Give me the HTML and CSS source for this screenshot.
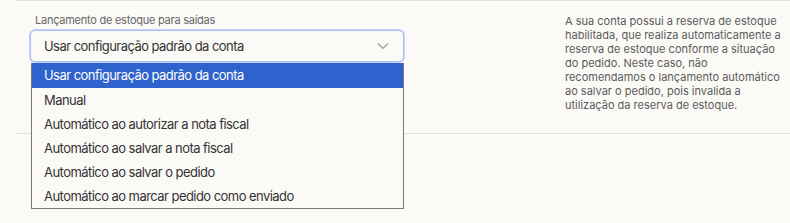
FILE: index.html
```html
<!DOCTYPE html>
<html lang="pt-BR">
<head>
  <meta charset="UTF-8" />
  <title>Lançamento de estoque</title>
  <link rel="stylesheet" href="styles.css">
</head>
<body>
  <div class="section">
    <div class="row">
      <div class="field">
        <label class="field-label">Lançamento de estoque para saídas</label>
        <div class="select">
          <span>Usar configuração padrão da conta</span>
          <svg class="chevron" width="12" height="8" viewBox="0 0 12 8">
            <path d="M1 1.5 L6 6.5 L11 1.5" fill="none" stroke="#9a9a9a" stroke-width="1.2"/>
          </svg>
        </div>
        <ul class="options">
          <li class="selected">Usar configuração padrão da conta</li>
          <li>Manual</li>
          <li>Automático ao autorizar a nota fiscal</li>
          <li>Automático ao salvar a nota fiscal</li>
          <li>Automático ao salvar o pedido</li>
          <li>Automático ao marcar pedido como enviado</li>
        </ul>
      </div>
      <p class="hint">A sua conta possui a reserva de estoque habilitada, que realiza automaticamente a reserva de estoque conforme a situação do pedido. Neste caso, não recomendamos o lançamento automático ao salvar o pedido, pois invalida a utilização da reserva de estoque.</p>
    </div>
  </div>
</body>
</html>
```
FILE: styles.css
```css
html, body {
  min-height: 223px;
}

body {
  margin: 0;
  background: #fbfaf7;
  font-family: Inter, "Noto Sans", sans-serif;
  color: #3a3a3a;
}

.section {
  margin-left: 16px;
  border-top: 1px solid #e4e2dd;
  border-bottom: 1px solid #e4e2dd;
  height: 132px;
}

.row {
  display: flex;
  padding: 13px 0 0 14px;
}

.field {
  position: relative;
  width: 374px;
}

.field-label {
  display: block;
  font-size: 11px;
  letter-spacing: -0.25px;
  color: #666;
  padding-left: 5px;
  line-height: 13px;
  margin-bottom: 3px;
}

.select {
  display: flex;
  align-items: center;
  justify-content: space-between;
  height: 32px;
  box-sizing: border-box;
  padding: 0 14px 0 13px;
  border: 1px solid #a9bdf0;
  border-radius: 5px;
  box-shadow: 0 0 0 1px #c7d4f7;
  font-size: 13px;
  letter-spacing: -0.55px;
  color: #333;
  background: #fbfaf7;
}

.options {
  position: absolute;
  top: 49px;
  left: 1px;
  width: 373px;
  box-sizing: border-box;
  margin: 0;
  padding: 0;
  list-style: none;
  background: #fbfaf7;
  border: 1px solid #7a7a7a;
  border-top: none;
  font-size: 13px;
  letter-spacing: -0.55px;
  color: #333;
}

.options li {
  height: 24px;
  line-height: 24px;
  padding-left: 12px;
}

.options li.selected {
  height: 25px;
  background: #2e62cc;
  color: #fff;
}

.hint {
  margin: 0 0 0 161px;
  width: 220px;
  font-size: 11px;
  line-height: 14px;
  color: #5a5a5a;
}
```
